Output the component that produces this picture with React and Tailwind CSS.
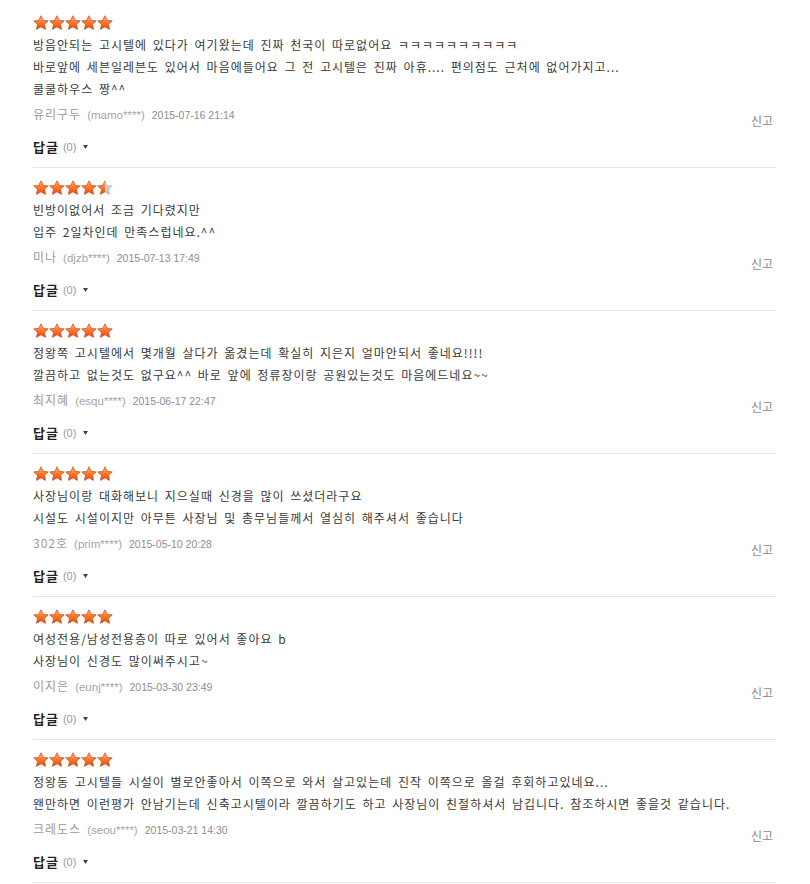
import { useId } from "react";

const reviews = [
  {
    rating: 5,
    lines: [
      "방음안되는 고시텔에 있다가 여기왔는데 진짜 천국이 따로없어요 ㅋㅋㅋㅋㅋㅋㅋㅋㅋㅋ",
      "바로앞에 세븐일레븐도 있어서 마음에들어요 그 전 고시텔은 진짜 아휴.... 편의점도 근처에 없어가지고...",
      "쿨쿨하우스 짱^^",
    ],
    name: "유리구두",
    user: "mamo****",
    date: "2015-07-16 21:14",
  },
  {
    rating: 4.5,
    lines: ["빈방이없어서 조금 기다렸지만", "입주 2일차인데 만족스럽네요.^^"],
    name: "미나",
    user: "djzb****",
    date: "2015-07-13 17:49",
  },
  {
    rating: 5,
    lines: [
      "정왕쪽 고시텔에서 몇개월 살다가 옮겼는데 확실히 지은지 얼마안되서 좋네요!!!!",
      "깔끔하고 없는것도 없구요^^ 바로 앞에 정류장이랑 공원있는것도 마음에드네요~~",
    ],
    name: "최지혜",
    user: "esqu****",
    date: "2015-06-17 22:47",
  },
  {
    rating: 5,
    lines: [
      "사장님이랑 대화해보니 지으실때 신경을 많이 쓰셨더라구요",
      "시설도 시설이지만 아무튼 사장님 및 총무님들께서 열심히 해주셔서 좋습니다",
    ],
    name: "302호",
    user: "prim****",
    date: "2015-05-10 20:28",
  },
  {
    rating: 5,
    lines: ["여성전용/남성전용층이 따로 있어서 좋아요 b", "사장님이 신경도 많이써주시고~"],
    name: "이지은",
    user: "eunj****",
    date: "2015-03-30 23:49",
  },
  {
    rating: 5,
    lines: [
      "정왕동 고시텔들 시설이 별로안좋아서 이쪽으로 와서 살고있는데 진작 이쪽으로 올걸 후회하고있네요...",
      "왠만하면 이런평가 안남기는데 신축고시텔이라 깔끔하기도 하고 사장님이 친절하셔서 남깁니다. 참조하시면 좋을것 같습니다.",
    ],
    name: "크레도스",
    user: "seou****",
    date: "2015-03-21 14:30",
  },
];

const STAR = "8,0.8 10.2,5.4 15.2,5.9 11.4,9.3 12.5,14.3 8,11.7 3.5,14.3 4.6,9.3 0.8,5.9 5.8,5.4";

const Star = ({ fill }) => {
  const id = useId().replace(/:/g, "");
  return (
    <svg width="16" height="15" viewBox="0 0 16 15">
      <defs>
        <linearGradient id={`o${id}`} x1="0" y1="0" x2="0" y2="1">
          <stop offset="0" stopColor="#ffb27a" />
          <stop offset="0.45" stopColor="#ff7a30" />
          <stop offset="1" stopColor="#e8490c" />
        </linearGradient>
        <linearGradient id={`g${id}`} x1="0" y1="0" x2="0" y2="1">
          <stop offset="0" stopColor="#e4e4e4" />
          <stop offset="1" stopColor="#b5b5b5" />
        </linearGradient>
        <clipPath id={`c${id}`}>
          <rect x="0" y="0" width={16 * fill} height="15" />
        </clipPath>
      </defs>
      <polygon points={STAR} fill={`url(#g${id})`} stroke="#a8a8a8" strokeWidth="0.6" />
      <g clipPath={`url(#c${id})`}>
        <polygon points={STAR} fill={`url(#o${id})`} stroke="#d9480f" strokeWidth="0.6" />
      </g>
    </svg>
  );
};

const Stars = ({ rating }) => (
  <div className="flex h-[15px]">
    {[0, 1, 2, 3, 4].map((i) => (
      <Star key={i} fill={Math.max(0, Math.min(1, rating - i))} />
    ))}
  </div>
);

const Review = ({ review }) => (
  <li className="border-b border-[#e6e6e6] pt-[12px] pb-[9px]">
    <Stars rating={review.rating} />
    <div className="mt-[4px] text-[12px] leading-[22px] tracking-[1px] text-[#3a3a3a] [word-spacing:2px]">
      {review.lines.map((line) => (
        <p key={line}>{line}</p>
      ))}
    </div>
    <div className="mt-[3px] flex items-start justify-between">
      <p className="flex items-baseline leading-[22px] text-[#9a9a9a]">
        <span className="text-[12px] tracking-[1px]">{review.name}</span>
        <span className="ml-[6px] font-['Liberation_Sans',sans-serif] text-[11.5px] text-[#a5a5a5]">
          ({review.user})
        </span>
        <span className="ml-[7px] font-['Liberation_Sans',sans-serif] text-[10.5px] text-[#8e8e8e]">
          {review.date}
        </span>
      </p>
      <button className="mt-[7px] mr-[3px] text-[12px] leading-[22px] text-[#8a8a8a]">신고</button>
    </div>
    <div className="mt-[4px] flex items-center leading-[22px]">
      <span className="text-[13px] font-bold tracking-[1px] text-[#222]">답글</span>
      <span className="ml-[4px] font-['Liberation_Sans',sans-serif] text-[11px] text-[#999]">(0)</span>
      <svg className="ml-[7px]" width="5" height="4" viewBox="0 0 5 4">
        <polygon points="0,0 5,0 2.5,4" fill="#444" />
      </svg>
    </div>
  </li>
);

export default function App() {
  return (
    <div className="min-h-screen bg-white pt-[3px] font-['Noto_Sans_CJK_KR','Noto_Sans',sans-serif]">
      <ul className="ml-[33px] w-[743px]">
        {reviews.map((review) => (
          <Review key={review.date} review={review} />
        ))}
      </ul>
    </div>
  );
}
